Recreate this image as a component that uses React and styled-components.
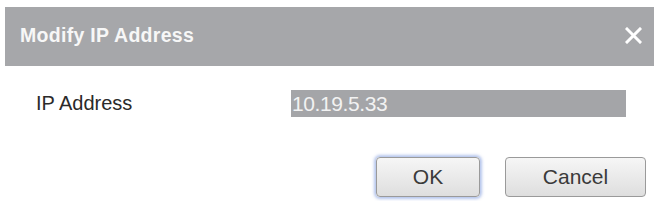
import React from "react";
import styled, { createGlobalStyle } from "styled-components";

const Global = createGlobalStyle`
  html, body { margin: 0; padding: 0; background: #ffffff; }
  body { font-family: "Liberation Sans", Arial, sans-serif; }
`;

const Dialog = styled.div`
  width: 659px;
  height: 201px;
  padding-top: 7px;
  box-sizing: border-box;
  background: #ffffff;
  display: flex;
  flex-direction: column;
`;

const Header = styled.div`
  margin: 0 5px;
  height: 59px;
  background: #a6a7aa;
  display: flex;
  align-items: center;
  justify-content: space-between;
  padding: 0 10px 2px 15px;
  box-sizing: border-box;
`;

const Title = styled.div`
  color: #f7f7f7;
  font-weight: bold;
  font-size: 19.5px;
  letter-spacing: 0.3px;
`;

const Close = styled.button`
  width: 22px;
  height: 22px;
  border: none;
  background: transparent;
  padding: 0;
  cursor: pointer;
  display: flex;
  align-items: center;
  justify-content: center;
`;

const Row = styled.div`
  display: flex;
  align-items: center;
  margin-top: 24px;
  padding-left: 36px;
  height: 27px;
`;

const Label = styled.div`
  width: 255px;
  font-size: 20px;
  color: #2a2a2a;
`;

const Input = styled.div`
  width: 335px;
  height: 27px;
  background: #a4a5a8;
  color: #f2f2f2;
  font-size: 21px;
  line-height: 27px;
  padding-left: 1px;
  box-sizing: border-box;
  letter-spacing: -0.4px;
`;

const Buttons = styled.div`
  display: flex;
  justify-content: flex-end;
  gap: 25px;
  margin-top: 40px;
  padding-right: 13px;
`;

const Button = styled.button`
  width: ${(p) => p.$w}px;
  height: 40px;
  box-sizing: border-box;
  border: 1px solid #9a9a9a;
  border-radius: 4px;
  background: linear-gradient(#f6f6f6, #dedede);
  font-family: "Liberation Sans", Arial, sans-serif;
  font-size: 21px;
  color: #3a3a3a;
  padding: 0;
  box-shadow: ${(p) =>
    p.$focus ? "0 0 3px 2px rgba(120, 150, 220, 0.55)" : "none"};
`;

export default function App() {
  return (
    <>
      <Global />
      <Dialog>
        <Header>
          <Title>Modify IP Address</Title>
          <Close aria-label="Close">
            <svg width="17" height="17" viewBox="0 0 17 17">
              <path
                d="M2 2 L15 15 M15 2 L2 15"
                stroke="#ffffff"
                strokeWidth="3"
                strokeLinecap="square"
              />
            </svg>
          </Close>
        </Header>
        <Row>
          <Label>IP Address</Label>
          <Input>10.19.5.33</Input>
        </Row>
        <Buttons>
          <Button $w={104} $focus>
            OK
          </Button>
          <Button $w={141}>Cancel</Button>
        </Buttons>
      </Dialog>
    </>
  );
}
